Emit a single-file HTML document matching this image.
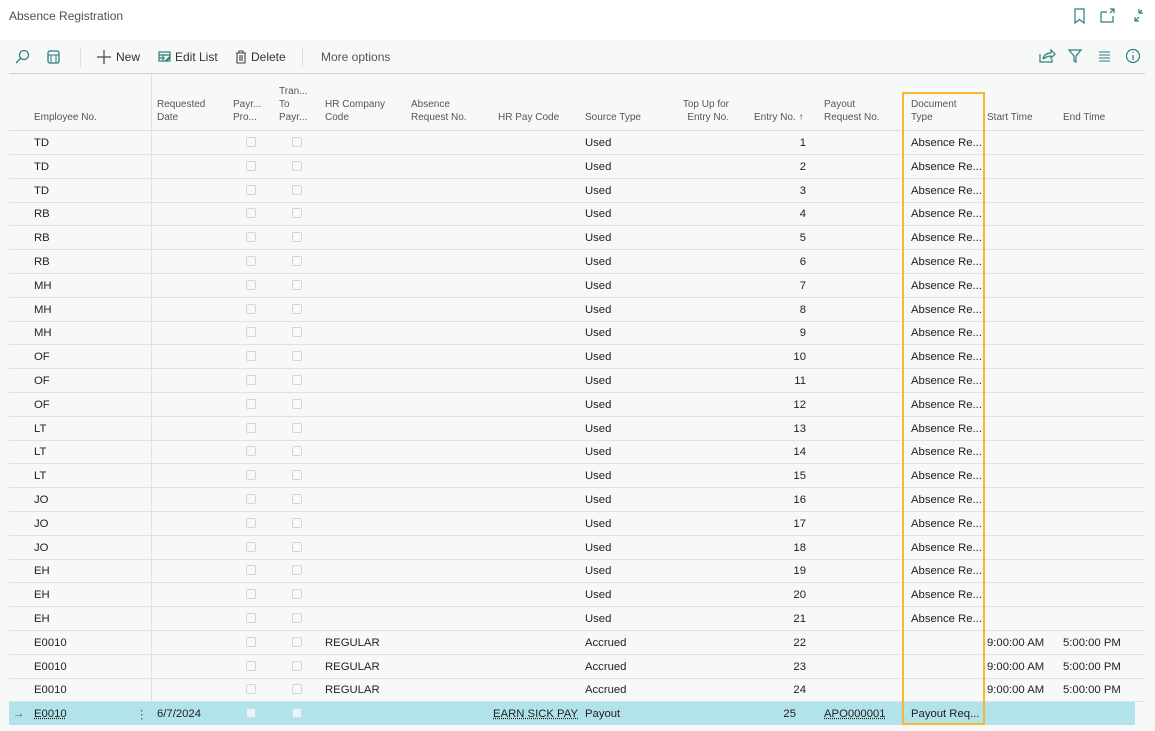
<!DOCTYPE html>
<html><head><meta charset="utf-8"><style>
*{margin:0;padding:0;box-sizing:border-box}
body{width:1155px;height:731px;overflow:hidden;background:#f7f8f8;font-family:"Segoe UI","Liberation Sans",sans-serif;color:#212121;position:relative}
.top{position:absolute;left:0;top:0;width:1155px;height:40px;background:#fff}
.title{position:absolute;left:9px;top:9px;font-size:12px;color:#505050}
.tb{position:absolute;top:50px;font-size:12px;color:#333}
.hl{position:absolute;left:9px;width:1136px;height:1px;background:#dcdcdc}
.h{position:absolute;font-size:10px;color:#555;line-height:13px;white-space:nowrap}
.r{position:absolute;left:9px;width:1136px;height:24px;border-bottom:1px solid #e1e1e1;font-size:11.3px}
.r span{position:absolute;top:6px;white-space:nowrap}
.r i{position:absolute;top:6px;width:10px;height:10px;border:1px solid #d4d4d4;border-radius:2px;background:#f9f9f9}
.c1{left:25px}.c2{left:148px}.cb1{left:237px}.cb2{left:283px}.c4{left:316px}.c6{left:489px}.c7{left:576px}.c8{right:339px}.c9{left:815px}.c10{left:902px}.c11{left:978px}.c12{left:1054px}
.sel{background:#b2e3ea}
.sel i{background:#e6f5f7;border-color:#cde}
</style></head><body>
<div class="top"></div>
<div class="title">Absence Registration</div>
<svg style="position:absolute;left:1073px;top:8px" width="70" height="16" fill="none" stroke="#2e7d7d" stroke-width="1.2">
<path d="M2 1h9v14l-4.5-3.5L2 15z"/>
<path d="M28 4h6M28 4v10h12v-6M37 1h4v4M41 1l-4 4"/>
<path d="M62 13l4-4M62 9v4h4M69 2l-3 3M66 1v4h4"/>
</svg>
<div style="position:absolute;left:9px;top:73px;width:1136px;height:1px;background:#d0d0d0"></div>
<svg style="position:absolute;left:14px;top:49px" width="50" height="16" fill="none" stroke="#2e7d7d" stroke-width="1.3">
<circle cx="10" cy="6" r="4.5"/><path d="M7 9l-5 5"/>
<rect x="34" y="2" width="11" height="12" rx="2"/><path d="M34 6h11M37 6v8M42 6v8" stroke-width="1"/>
</svg>
<div style="position:absolute;left:80px;top:47px;width:1px;height:20px;background:#ddd"></div>
<svg style="position:absolute;left:97px;top:50px" width="14" height="14" stroke="#444" stroke-width="1.2"><path d="M7 0v14M0 7h14"/></svg>
<div class="tb" style="left:116px">New</div>
<svg style="position:absolute;left:158px;top:51px" width="14" height="12" fill="none" stroke="#2e7d7d" stroke-width="1.2"><rect x="1" y="1" width="11" height="9"/><path d="M1 4h11M1 7h6M5 4v6"/><path d="M8 10l4-4" stroke-width="2"/></svg>
<div class="tb" style="left:175px">Edit List</div>
<svg style="position:absolute;left:235px;top:50px" width="12" height="14" fill="none" stroke="#444" stroke-width="1.1"><path d="M1 3h10M4 3V1h4v2M2 3v10h8V3M5 5v6M7 5v6"/></svg>
<div class="tb" style="left:251px">Delete</div>
<div style="position:absolute;left:302px;top:47px;width:1px;height:20px;background:#ddd"></div>
<div class="tb" style="left:321px;color:#555">More options</div>
<svg style="position:absolute;left:1038px;top:48px" width="105" height="16" fill="none" stroke="#2e7d7d" stroke-width="1.2">
<path d="M2 6v8h12v-3M5 11c1-4 4-6 8-6V2l4 4-4 4V8c-3 0-5 1-8 3"/>
<path d="M31 2h12l-5 6v6l-2-1V8z"/>
<path d="M61 4h11M61 7h11M61 10h11M61 13h11" stroke-width="1"/>
<circle cx="95" cy="8" r="6.5"/><path d="M95 7v5M95 4v1"/>
</svg>
<div class="h" style="left:34px;top:111px">Employee No.</div>
<div style="position:absolute;left:151px;top:74px;width:1px;height:628px;background:#e1e1e1"></div>
<div class="h" style="left:157px;top:98px">Requested<br>Date</div>
<div class="h" style="left:233px;top:98px">Payr...<br>Pro...</div>
<div class="h" style="left:279px;top:85px">Tran...<br>To<br>Payr...</div>
<div class="h" style="left:325px;top:98px">HR Company<br>Code</div>
<div class="h" style="left:411px;top:98px">Absence<br>Request No.</div>
<div class="h" style="left:498px;top:111px">HR Pay Code</div>
<div class="h" style="left:585px;top:111px">Source Type</div>
<div class="h" style="left:669px;top:98px;text-align:right;width:60px">Top Up for<br>Entry No.</div>
<div class="h" style="left:754px;top:111px">Entry No. ↑</div>
<div class="h" style="left:824px;top:98px">Payout<br>Request No.</div>
<div class="h" style="left:911px;top:98px">Document<br>Type</div>
<div class="h" style="left:987px;top:111px">Start Time</div>
<div class="h" style="left:1063px;top:111px">End Time</div>
<div class="hl" style="top:130px"></div>

<div class="r" style="top:131px"><span class="c1">TD</span><i class="cb1"></i><i class="cb2"></i><span class="c7">Used</span><span class="c8">1</span><span class="c10">Absence Re...</span></div>
<div class="r" style="top:154.8px"><span class="c1">TD</span><i class="cb1"></i><i class="cb2"></i><span class="c7">Used</span><span class="c8">2</span><span class="c10">Absence Re...</span></div>
<div class="r" style="top:178.6px"><span class="c1">TD</span><i class="cb1"></i><i class="cb2"></i><span class="c7">Used</span><span class="c8">3</span><span class="c10">Absence Re...</span></div>
<div class="r" style="top:202.4px"><span class="c1">RB</span><i class="cb1"></i><i class="cb2"></i><span class="c7">Used</span><span class="c8">4</span><span class="c10">Absence Re...</span></div>
<div class="r" style="top:226.2px"><span class="c1">RB</span><i class="cb1"></i><i class="cb2"></i><span class="c7">Used</span><span class="c8">5</span><span class="c10">Absence Re...</span></div>
<div class="r" style="top:250px"><span class="c1">RB</span><i class="cb1"></i><i class="cb2"></i><span class="c7">Used</span><span class="c8">6</span><span class="c10">Absence Re...</span></div>
<div class="r" style="top:273.8px"><span class="c1">MH</span><i class="cb1"></i><i class="cb2"></i><span class="c7">Used</span><span class="c8">7</span><span class="c10">Absence Re...</span></div>
<div class="r" style="top:297.6px"><span class="c1">MH</span><i class="cb1"></i><i class="cb2"></i><span class="c7">Used</span><span class="c8">8</span><span class="c10">Absence Re...</span></div>
<div class="r" style="top:321.4px"><span class="c1">MH</span><i class="cb1"></i><i class="cb2"></i><span class="c7">Used</span><span class="c8">9</span><span class="c10">Absence Re...</span></div>
<div class="r" style="top:345.2px"><span class="c1">OF</span><i class="cb1"></i><i class="cb2"></i><span class="c7">Used</span><span class="c8">10</span><span class="c10">Absence Re...</span></div>
<div class="r" style="top:369px"><span class="c1">OF</span><i class="cb1"></i><i class="cb2"></i><span class="c7">Used</span><span class="c8">11</span><span class="c10">Absence Re...</span></div>
<div class="r" style="top:392.8px"><span class="c1">OF</span><i class="cb1"></i><i class="cb2"></i><span class="c7">Used</span><span class="c8">12</span><span class="c10">Absence Re...</span></div>
<div class="r" style="top:416.6px"><span class="c1">LT</span><i class="cb1"></i><i class="cb2"></i><span class="c7">Used</span><span class="c8">13</span><span class="c10">Absence Re...</span></div>
<div class="r" style="top:440.4px"><span class="c1">LT</span><i class="cb1"></i><i class="cb2"></i><span class="c7">Used</span><span class="c8">14</span><span class="c10">Absence Re...</span></div>
<div class="r" style="top:464.2px"><span class="c1">LT</span><i class="cb1"></i><i class="cb2"></i><span class="c7">Used</span><span class="c8">15</span><span class="c10">Absence Re...</span></div>
<div class="r" style="top:488px"><span class="c1">JO</span><i class="cb1"></i><i class="cb2"></i><span class="c7">Used</span><span class="c8">16</span><span class="c10">Absence Re...</span></div>
<div class="r" style="top:511.8px"><span class="c1">JO</span><i class="cb1"></i><i class="cb2"></i><span class="c7">Used</span><span class="c8">17</span><span class="c10">Absence Re...</span></div>
<div class="r" style="top:535.6px"><span class="c1">JO</span><i class="cb1"></i><i class="cb2"></i><span class="c7">Used</span><span class="c8">18</span><span class="c10">Absence Re...</span></div>
<div class="r" style="top:559.4px"><span class="c1">EH</span><i class="cb1"></i><i class="cb2"></i><span class="c7">Used</span><span class="c8">19</span><span class="c10">Absence Re...</span></div>
<div class="r" style="top:583.2px"><span class="c1">EH</span><i class="cb1"></i><i class="cb2"></i><span class="c7">Used</span><span class="c8">20</span><span class="c10">Absence Re...</span></div>
<div class="r" style="top:607px"><span class="c1">EH</span><i class="cb1"></i><i class="cb2"></i><span class="c7">Used</span><span class="c8">21</span><span class="c10">Absence Re...</span></div>
<div class="r" style="top:630.8px"><span class="c1">E0010</span><i class="cb1"></i><i class="cb2"></i><span class="c4">REGULAR</span><span class="c7">Accrued</span><span class="c8">22</span><span class="c11">9:00:00 AM</span><span class="c12">5:00:00 PM</span></div>
<div class="r" style="top:654.6px"><span class="c1">E0010</span><i class="cb1"></i><i class="cb2"></i><span class="c4">REGULAR</span><span class="c7">Accrued</span><span class="c8">23</span><span class="c11">9:00:00 AM</span><span class="c12">5:00:00 PM</span></div>
<div class="r" style="top:678.4px"><span class="c1">E0010</span><i class="cb1"></i><i class="cb2"></i><span class="c4">REGULAR</span><span class="c7">Accrued</span><span class="c8">24</span><span class="c11">9:00:00 AM</span><span class="c12">5:00:00 PM</span></div>
<div class="r sel" style="top:702px;width:1126px;height:23px;border:none"><span style="left:4px;color:#555">→</span><span class="c1" style="text-decoration:underline dotted">E0010</span><span style="left:127px;color:#555">⋮</span><span class="c2">6/7/2024</span><i class="cb1"></i><i class="cb2"></i><span style="right:557px;text-decoration:underline dotted">EARN SICK PAY</span><span class="c7">Payout</span><span class="c8">25</span><span class="c9" style="text-decoration:underline dotted">APO000001</span><span class="c10">Payout Req...</span></div>
<div style="position:absolute;left:902px;top:92px;width:83px;height:633px;border:2px solid #f5b82e"></div>
</body></html>
